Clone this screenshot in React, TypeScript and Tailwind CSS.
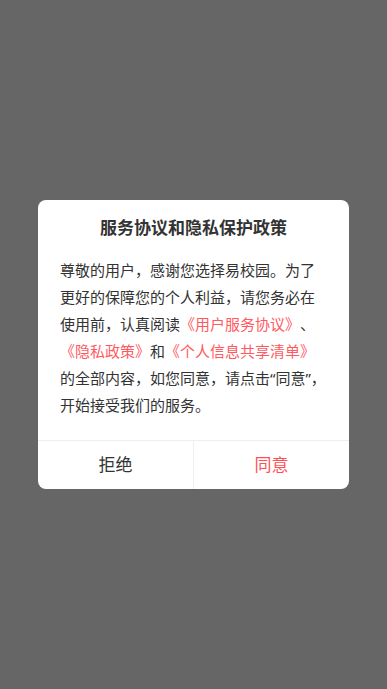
export default function App() {
  return (
    <div
      className="min-h-screen w-full bg-[#666666] flex items-center justify-center [text-spacing-trim:space-all]"
      style={{ fontFamily: '"Noto Sans", "Noto Sans CJK SC", sans-serif' }}
    >
      <div className="w-[311px] bg-white rounded-[8px] overflow-hidden">
        {/* Title */}
        <h2 className="pt-[16px] text-center text-[17px] leading-[24px] font-bold text-[#333333]">
          服务协议和隐私保护政策
        </h2>

        {/* Body */}
        <p className="px-[22px] pt-[17px] pb-[21px] text-[15px] leading-[27px] text-[#333333]">
          尊敬的用户，感谢您选择易校园。为了更好的保障您的个人利益，请您务必在使用前，认真阅读
          <span className="text-[#ff5a5f]">《用户服务协议》</span>、
          <span className="text-[#ff5a5f]">《隐私政策》</span>和
          <span className="text-[#ff5a5f]">《个人信息共享清单》</span>
          的全部内容，如您同意，请点击“同意”，开始接受我们的服务。
        </p>

        {/* Buttons */}
        <div className="flex border-t border-[#eeeeee]">
          <button className="flex-1 h-[48px] text-[17px] text-[#333333] border-r border-[#eeeeee]">
            拒绝
          </button>
          <button className="flex-1 h-[48px] text-[17px] text-[#ff4f55]">
            同意
          </button>
        </div>
      </div>
    </div>
  )
}
